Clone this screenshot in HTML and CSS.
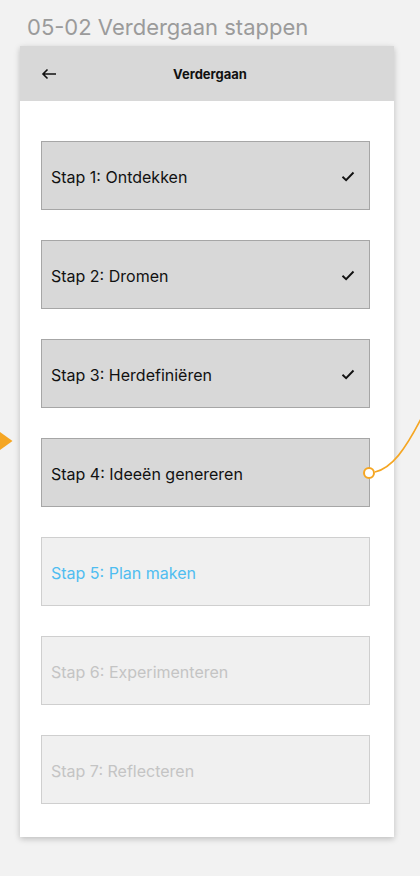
FILE: index.html
```html
<!DOCTYPE html>
<html lang="nl">
<head>
<meta charset="utf-8">
<title>05-02 Verdergaan stappen</title>
<link rel="stylesheet" href="styles.css">
</head>
<body>
<div class="canvas">
  <h1 class="board-title">05-02 Verdergaan stappen</h1>
  <div class="artboard">
    <header class="appbar">
      <svg class="back" width="16" height="12" viewBox="0 0 16 12" aria-hidden="true">
        <path d="M15 6H2.5M6.5 1.5L2 6l4.5 4.5" fill="none" stroke="#111" stroke-width="1.6"/>
      </svg>
      <span class="appbar-title">Verdergaan</span>
    </header>
    <ul class="steps">
      <li class="step done"><span>Stap 1: Ontdekken</span><svg class="check" width="14" height="11" viewBox="0 0 14 11"><path d="M1.5 5.8l3.6 3.4L12.5 1.5" fill="none" stroke="#111" stroke-width="1.9"/></svg></li>
      <li class="step done"><span>Stap 2: Dromen</span><svg class="check" width="14" height="11" viewBox="0 0 14 11"><path d="M1.5 5.8l3.6 3.4L12.5 1.5" fill="none" stroke="#111" stroke-width="1.9"/></svg></li>
      <li class="step done"><span>Stap 3: Herdefiniëren</span><svg class="check" width="14" height="11" viewBox="0 0 14 11"><path d="M1.5 5.8l3.6 3.4L12.5 1.5" fill="none" stroke="#111" stroke-width="1.9"/></svg></li>
      <li class="step done"><span>Stap 4: Ideeën genereren</span></li>
      <li class="step next"><span>Stap 5: Plan maken</span></li>
      <li class="step locked"><span>Stap 6: Experimenteren</span></li>
      <li class="step locked"><span>Stap 7: Reflecteren</span></li>
    </ul>
  </div>
  <svg class="flow-in" width="13" height="18" viewBox="0 0 13 18" aria-hidden="true">
    <path d="M0 0L12.5 9L0 18Z" fill="#f5a623"/>
  </svg>
  <svg class="flow-out" width="60" height="70" viewBox="0 0 60 70" aria-hidden="true">
    <path d="M14 62C31 58 44 40 61 7" fill="none" stroke="#f5a623" stroke-width="1.6"/>
    <circle cx="8" cy="63" r="5" fill="#fff" stroke="#f5a623" stroke-width="2"/>
  </svg>
</div>
</body>
</html>
```
FILE: styles.css
```css
* { box-sizing: border-box; }
html, body {
  margin: 0;
  padding: 0;
  background: #f2f2f2;
}
body {
  font-family: Inter, "Noto Sans", "Liberation Sans", sans-serif;
  width: 420px;
  height: 876px;
  overflow: hidden;
}
.canvas {
  position: relative;
  width: 420px;
  height: 876px;
}
.board-title {
  margin: 0;
  padding: 13px 0 0 27px;
  height: 46px;
  font-size: 22px;
  line-height: 28px;
  font-weight: 400;
  color: #9b9b9b;
}
.artboard {
  margin-left: 20px;
  width: 374px;
  height: 791px;
  background: #fff;
  box-shadow: 0 2px 6px rgba(0, 0, 0, 0.22);
  display: flex;
  flex-direction: column;
}
.appbar {
  height: 55px;
  background: #d8d8d8;
  display: flex;
  align-items: center;
  position: relative;
  padding-left: 21px;
}
.back { display: block; }
.appbar-title {
  flex: 1;
  text-align: center;
  margin-right: 34px;
  font-size: 13px;
  font-weight: 700;
  color: #111;
  padding-left: 3px;
}
.steps {
  list-style: none;
  margin: 0;
  padding: 40px 0 0 21px;
  display: flex;
  flex-direction: column;
  gap: 30px;
}
.step {
  width: 329px;
  height: 69px;
  display: flex;
  align-items: center;
  justify-content: space-between;
  padding: 2px 14px 0 9px;
  font-size: 16px;
  border: 1px solid;
}
.step.done {
  background: #d8d8d8;
  border-color: #a6a6a6;
  color: #111;
}
.step.next {
  background: #f0f0f0;
  border-color: #cfcfcf;
  color: #4fbdf0;
}
.step.locked {
  background: #f0f0f0;
  border-color: #cfcfcf;
  color: #c4c4c4;
}
.check { display: block; margin-top: -1px; }
.flow-in {
  position: absolute;
  left: 0;
  top: 432px;
}
.flow-out {
  position: absolute;
  left: 361px;
  top: 410px;
  overflow: visible;
}
```
